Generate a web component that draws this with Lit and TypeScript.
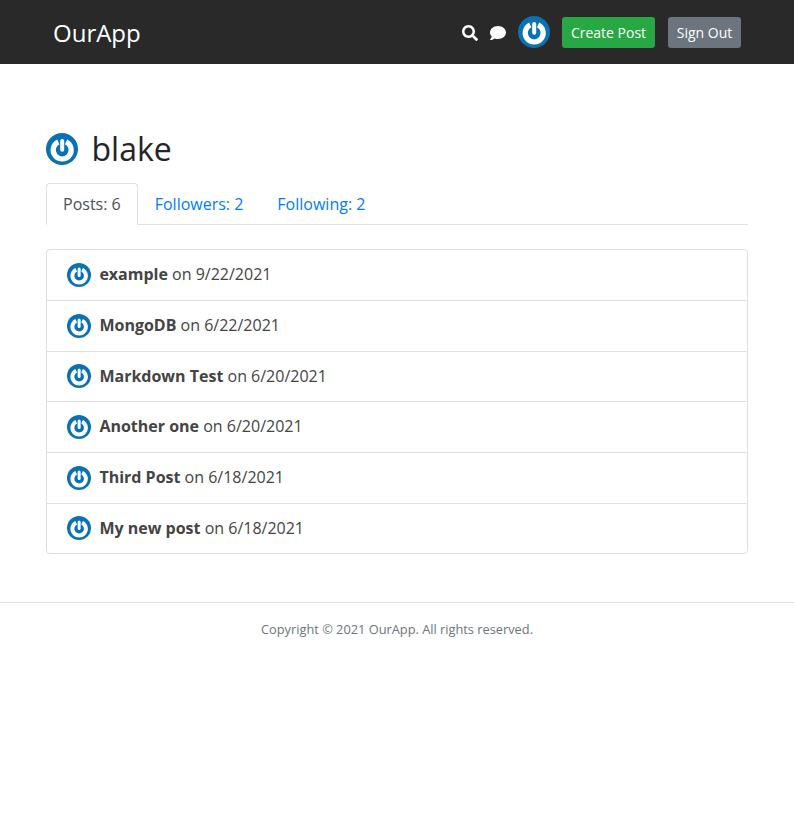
import { LitElement, html, css, svg } from "lit";
import { customElement } from "lit/decorators.js";

const avatar = (size: number) => html`<svg class="avatar" width=${size} height=${size} viewBox="0 0 32 32" aria-hidden="true">
  <circle cx="16" cy="16" r="16" fill="#0a72b2"></circle>
  ${svg`<path d="M12.300 8.900A9 9 0 1 0 20.100 8.900" fill="none" stroke="#fff" stroke-width="5.2"></path>
  <path d="M16.200 8V16.800" stroke="#fff" stroke-width="4" stroke-linecap="round" fill="none"></path>`}
</svg>`;

const posts = [
  ["example", "9/22/2021"],
  ["MongoDB", "6/22/2021"],
  ["Markdown Test", "6/20/2021"],
  ["Another one", "6/20/2021"],
  ["Third Post", "6/18/2021"],
  ["My new post", "6/18/2021"],
];

@customElement("app-root")
export class AppRoot extends LitElement {
  static styles = css`
    :host { display: block; font-family: "Open Sans", sans-serif; font-size: 16px; line-height: 24px; color: #444; background: #fff; min-height: 834px; }
    * { box-sizing: border-box; }
    .avatar { display: block; flex: none; }
    header { height: 64px; background: #292929; display: flex; align-items: center; padding: 0 53px; }
    .logo { font-size: 24px; line-height: 36px; color: #fff; margin-right: auto; margin-top: 2px; }
    .icon { display: block; fill: #fff; flex: none; margin-top: 2px; }
    .search { margin-right: 12px; }
    .chat { margin-right: 12px; }
    .nav-avatar { margin-right: 12px; }
    .btn { height: 31px; border-radius: 3px; color: #fff; font-size: 14px; line-height: 21px; padding: 5px 0; display: block; text-align: center; }
    .green { background: #28a745; margin-right: 13px; width: 93px; }
    .gray { background: #6c757d; width: 73px; }
    main { padding: 66px 46px 0; }
    h2 { margin: 0; display: flex; align-items: center; gap: 13.5px; font-size: 32px; line-height: 38px; font-weight: 400; color: #212529; height: 38px; }
    .tabs { display: flex; margin-top: 15px; border-bottom: 1px solid #dee2e6; height: 42px; }
    .tab { padding: 8px 16px; height: 42px; color: #007bff; border: 1px solid transparent; }
    .tab.active { color: #495057; background: #fff; border-color: #dee2e6 #dee2e6 #fff; border-radius: 4px 4px 0 0; }
    .list { margin-top: 24px; border: 1px solid #dfdfdf; border-radius: 4px; }
    .row { display: flex; align-items: center; height: 50.65px; padding: 0 20px; gap: 8.4px; border-top: 1px solid #dfdfdf; color: #444; }
    .row:first-child { border-top: 0; height: 50px; }
    .row span { margin-top: -1.4px; }
    .row b { font-weight: 700; }
    footer { margin-top: 48px; border-top: 1px solid #dfdfdf; padding-top: 17px; text-align: center; font-size: 12.8px; line-height: 19px; color: #6c757d; }
  `;

  render() {
    return html`
      <header>
        <div class="logo">OurApp</div>
        <svg class="icon search" width="16" height="16" viewBox="0 0 512 512"><path d="M505 442.7 405.300 343c-4.500-4.500-10.600-7-17-7H372c27.600-35.300 44-79.700 44-128C416 93.100 322.900 0 208 0S0 93.100 0 208s93.100 208 208 208c48.300 0 92.700-16.400 128-44v16.300c0 6.400 2.500 12.500 7 17l99.700 99.700c9.400 9.400 24.600 9.400 33.900 0l28.300-28.300c9.400-9.400 9.400-24.600.1-34zM208 336c-70.700 0-128-57.200-128-128 0-70.700 57.200-128 128-128 70.700 0 128 57.200 128 128 0 70.700-57.200 128-128 128z"></path></svg>
        <svg class="icon chat" width="16" height="16" viewBox="0 0 512 512"><path d="M256 32C114.600 32 0 125.100 0 240c0 49.600 21.400 95 57 130.700C44.500 421.100 2.700 466 2.200 466.500c-2.200 2.300-2.800 5.700-1.500 8.700S4.800 480 8 480c66.300 0 116-31.800 140.600-51.400 32.700 12.300 69 19.400 107.400 19.400 141.400 0 256-93.100 256-208S397.400 32 256 32z"></path></svg>
        <div class="nav-avatar">${avatar(32)}</div>
        <div class="btn green">Create Post</div>
        <div class="btn gray">Sign Out</div>
      </header>
      <main>
        <h2>${avatar(32)}<span>blake</span></h2>
        <div class="tabs">
          <div class="tab active">Posts: 6</div>
          <div class="tab">Followers: 2</div>
          <div class="tab">Following: 2</div>
        </div>
        <div class="list">
          ${posts.map(([t, d]) => html`<div class="row">${avatar(24)}<span><b>${t}</b> on ${d}</span></div>`)}
        </div>
      </main>
      <footer>Copyright © 2021 OurApp. All rights reserved.</footer>
    `;
  }
}
